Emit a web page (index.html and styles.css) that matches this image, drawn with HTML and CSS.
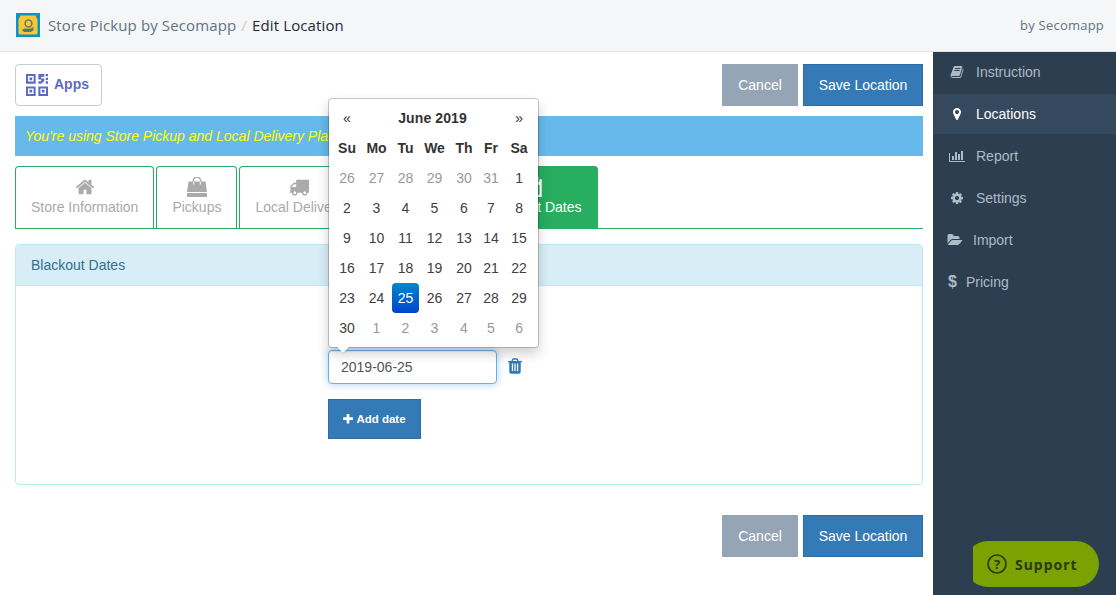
FILE: index.html
```html
<!DOCTYPE html>
<html lang="en">
<head>
<meta charset="utf-8">
<title>Edit Location</title>
<link rel="stylesheet" href="styles.css">
</head>
<body>
<header class="topbar">
  <div class="crumbs">
    <svg class="logo" viewBox="0 0 24 24"><rect width="24" height="24" fill="#0a93c4"/><path d="M4.500 2.500h15l2 4V20a1.500 1.500 0 0 1-1.500 1.500H4A1.500 1.500 0 0 1 2.500 20V6.500z" fill="#f8c832"/><circle cx="12.500" cy="10.500" r="3.400" fill="none" stroke="#5f7a70" stroke-width="1.500"/><path d="M6 17c3-2.500 5-1.200 7-1.200s3-1 4.500-2v3.500l-3 1.700H8z" fill="#4f7a70"/></svg>
    <span class="crumb-app">Store Pickup by Secomapp</span>
    <span class="crumb-sep">/</span>
    <span class="crumb-page">Edit Location</span>
  </div>
  <div class="byline">by Secomapp</div>
</header>
<div class="layout">
  <main class="main">
    <div class="toolbar">
      <a class="apps-btn">
        <svg class="apps-icon" viewBox="0 0 24 24" fill="#5c6ac4"><path d="M0 0h10.500v10.500H0zM2.200 2.200v6.100h6.100V2.200zM3.800 3.800h2.900v2.900H3.800zM0 13.500h10.500V24H0zM2.200 15.700v6.100h6.100v-6.100zM3.800 17.300h2.900v2.900H3.800zM13.500 13.500H24V24H13.500zM15.700 15.700v6.100h6.100v-6.100zM17.300 17.300h2.900v2.900h-2.900zM13.500 0h6.500v3h-3.500v2H20v2.500l-3.500 3h-3V8h3V6h-3zM21.500 0H24v2.500h-2.500zM21.500 4H24v2.500h-2.500zM21.500 8H24v2.500h-2.500z" fill-rule="evenodd"/></svg>
        <span class="apps-label">Apps</span>
      </a>
      <div class="actions">
        <button class="btn btn-cancel">Cancel</button>
        <button class="btn btn-save">Save Location</button>
      </div>
    </div>
    <div class="alert">You're using Store Pickup and Local Delivery Plan</div>
    <nav class="tabs">
      <a class="tab">
        <svg class="tab-icon" viewBox="0 0 1792 1792"><path d="M1472 992v480q0 26-19 45t-45 19h-384v-384h-256v384h-384q-26 0-45-19t-19-45v-480q0-1 .5-3t.5-3l575-474 575 474q1 2 1 6zm223-69l-62 74q-8 9-21 11h-3q-13 0-21-7l-692-577-692 577q-12 8-24 7-13-2-21-11l-62-74q-8-10-7-23.500t11-21.500l719-599q32-26 76-26t76 26l244 204v-195q0-14 9-23t23-9h192q14 0 23 9t9 23v408l219 182q10 8 11 21.500t-7 23.500z"/></svg>
        <span>Store Information</span>
      </a>
      <a class="tab">
        <svg class="tab-icon" viewBox="0 0 20 20"><path d="M1.500 4.500h17L20 15H0z"/><path d="M0 16h20v4H0z"/><path d="M6.200 8V4a3.800 3.800 0 0 1 7.600 0v4" fill="none" stroke="#aaa" stroke-width="1.300"/><path d="M6.200 7.500V4.500h1v3zM12.800 7.500V4.500h1v3z" fill="#fff"/></svg>
        <span>Pickups</span>
      </a>
      <a class="tab">
        <svg class="tab-icon" viewBox="0 0 1792 1792"><path d="M640 1408q0-52-38-90t-90-38-90 38-38 90 38 90 90 38 90-38 38-90zm-384-512h384v-256h-158q-13 0-22 9l-195 195q-9 9-9 22v30zm1280 512q0-52-38-90t-90-38-90 38-38 90 38 90 90 38 90-38 38-90zm256-1088v1024q0 15-4 26.500t-13.500 18.500-16.500 11.500-23.500 6-22.500 2-25.500 0-22.500-.5q0 106-75 181t-181 75-181-75-75-181h-384q0 106-75 181t-181 75-181-75-75-181h-64q-3 0-22.500.5t-25.500 0-22.500-2-23.500-6-16.500-11.500-13.500-18.500-4-26.500q0-26 19-45t45-19v-320q0-8-.5-35t0-38 2.500-34.500 6.500-37 14-30.500 22.500-30l198-198q19-19 50.500-32t58.500-13h160v-192q0-26 19-45t45-19h1024q26 0 45 19t19 45z"/></svg>
        <span>Local Delivery</span>
      </a>
      <a class="tab tab-active">
        <svg class="tab-icon" viewBox="0 0 16 18"><path d="M4 0h2v3H4zM10 0h2v3h-2zM1 2h2v2h4V2h2v2h4V2h2v16H1zM3 7v9h10V7z" fill-rule="evenodd"/></svg>
        <span>Blackout Dates</span>
      </a>
    </nav>
    <section class="panel">
      <div class="panel-heading">Blackout Dates</div>
      <div class="panel-body">
        <div class="date-row">
          <div class="date-field">
            <input class="date-input" type="text" value="2019-06-25">
            <div class="datepicker">
              <table class="cal">
                <colgroup><col class="c1"><col class="c2"><col class="c3"><col class="c4"><col class="c5"><col class="c6"><col class="c7"></colgroup>
                <thead>
                  <tr class="cal-title"><th>«</th><th colspan="5">June 2019</th><th>»</th></tr>
                  <tr><th>Su</th><th>Mo</th><th>Tu</th><th>We</th><th>Th</th><th>Fr</th><th>Sa</th></tr>
                </thead>
                <tbody>
                  <tr><td class="old">26</td><td class="old">27</td><td class="old">28</td><td class="old">29</td><td class="old">30</td><td class="old">31</td><td>1</td></tr>
                  <tr><td>2</td><td>3</td><td>4</td><td>5</td><td>6</td><td>7</td><td>8</td></tr>
                  <tr><td>9</td><td>10</td><td>11</td><td>12</td><td>13</td><td>14</td><td>15</td></tr>
                  <tr><td>16</td><td>17</td><td>18</td><td>19</td><td>20</td><td>21</td><td>22</td></tr>
                  <tr><td>23</td><td>24</td><td class="active">25</td><td>26</td><td>27</td><td>28</td><td>29</td></tr>
                  <tr><td>30</td><td class="old">1</td><td class="old">2</td><td class="old">3</td><td class="old">4</td><td class="old">5</td><td class="old">6</td></tr>
                </tbody>
              </table>
            </div>
          </div>
          <svg class="trash" viewBox="192 128 1408 1536"><path d="M704 1376v-704q0-14-9-23t-23-9h-64q-14 0-23 9t-9 23v704q0 14 9 23t23 9h64q14 0 23-9t9-23zm256 0v-704q0-14-9-23t-23-9h-64q-14 0-23 9t-9 23v704q0 14 9 23t23 9h64q14 0 23-9t9-23zm256 0v-704q0-14-9-23t-23-9h-64q-14 0-23 9t-9 23v704q0 14 9 23t23 9h64q14 0 23-9t9-23zm-544-992h448l-48-117q-7-9-17-11h-317q-10 2-17 11zm928 32v64q0 14-9 23t-23 9h-96v948q0 83-47 143.500t-113 60.500h-832q-66 0-113-58.500t-47-141.500v-952h-96q-14 0-23-9t-9-23v-64q0-14 9-23t23-9h309l70-167q15-37 54-63t79-26h320q40 0 79 26t54 63l70 167h309q14 0 23 9t9 23z"/></svg>
        </div>
        <button class="btn-add">
          <svg class="plus" viewBox="192 192 1408 1408"><path d="M1600 736v192q0 40-28 68t-68 28h-416v416q0 40-28 68t-68 28h-192q-40 0-68-28t-28-68v-416h-416q-40 0-68-28t-28-68v-192q0-40 28-68t68-28h416v-416q0-40 28-68t68-28h192q40 0 68 28t28 68v416h416q40 0 68 28t28 68z"/></svg>
          <span>Add date</span>
        </button>
      </div>
    </section>
    <div class="actions actions-bottom">
      <button class="btn btn-cancel">Cancel</button>
      <button class="btn btn-save">Save Location</button>
    </div>
  </main>
  <aside class="sidebar">
    <a class="nav-item nav-wide">
      <svg class="nav-icon" viewBox="0 0 1792 1792"><path d="M1703 478q40 57 18 129l-275 906q-19 64-76.500 107.500t-122.500 43.500h-923q-77 0-148.500-53.500t-99.500-131.500q-24-67-2-127 0-4 3-27t4-37q1-8-3-21.500t-3-19.500q2-11 8-21t16.500-23.500 16.500-23.500q23-38 45-91.500t30-91.500q3-10 .5-30t-.5-28q3-11 17-28t17-23q21-36 42-92t25-90q1-9-2.500-32t.5-28q4-13 22-30.500t22-22.500q19-26 42.500-84.500t27.500-96.500q1-8-3-25.500t-2-26.500q2-8 9-18t18-23 17-21q8-12 16.500-30.500t15-35 16-36 19.500-32 26.500-23.500 36-11.500 47.500 5.500l-1 3q38-9 51-9h761q74 0 114 56t18 130l-274 906q-36 119-71.500 153.500t-128.500 34.500h-869q-27 0-38 15-11 16-1 43 24 70 144 70h923q29 0 56-15.500t35-41.500l300-987q7-22 5-57 38 15 59 43zm-1064 2q-4 13 2 22.500t20 9.500h608q13 0 25.500-9.500t16.500-22.500l21-64q4-13-2-22.500t-20-9.500h-608q-13 0-25.500 9.500t-16.500 22.500zm-83 256q-4 13 2 22.500t20 9.500h608q13 0 25.500-9.500t16.500-22.500l21-64q4-13-2-22.500t-20-9.500h-608q-13 0-25.500 9.500t-16.500 22.500z"/></svg>
      <span>Instruction</span>
    </a>
    <a class="nav-item nav-wide nav-active">
      <svg class="nav-icon" viewBox="0 0 1792 1792"><path d="M1152 640q0-106-75-181t-181-75-181 75-75 181 75 181 181 75 181-75 75-181zm256 0q0 109-33 179l-364 774q-16 33-47.500 52t-67.500 19-67.500-19-46.500-52l-365-774q-33-70-33-179 0-212 150-362t362-150 362 150 150 362z"/></svg>
      <span>Locations</span>
    </a>
    <a class="nav-item nav-wide">
      <svg class="nav-icon" viewBox="0 0 2048 1792"><path d="M640 896v512h-256v-512h256zm384-512v1024h-256v-1024h256zm1024 1152v128h-2048v-1152h128v1024h1920zm-640-896v768h-256v-768h256zm384-384v1152h-256v-1152h256z"/></svg>
      <span>Report</span>
    </a>
    <a class="nav-item nav-wide">
      <svg class="nav-icon" viewBox="0 0 1792 1792"><path d="M1152 896q0-106-75-181t-181-75-181 75-75 181 75 181 181 75 181-75 75-181zm512-109v222q0 12-8 23t-20 13l-185 28q-19 54-39 91 35 50 107 138 10 12 10 25t-9 23q-27 37-99 108t-94 71q-12 0-26-9l-138-108q-44 23-91 38-16 136-29 186-7 28-36 28h-222q-14 0-24.500-8.500t-11.500-21.500l-28-184q-49-16-90-37l-141 107q-10 9-25 9-14 0-25-11-126-114-165-168-7-10-7-23 0-12 8-23 15-21 51-66.500t54-70.500q-27-50-41-99l-183-27q-13-2-21-12.500t-8-23.500v-222q0-12 8-23t19-13l186-28q14-46 39-92-40-57-107-138-10-12-10-24 0-10 9-23 26-36 98.500-107.500t94.500-71.500q13 0 26 10l138 107q44-23 91-38 16-136 29-186 7-28 36-28h222q14 0 24.500 8.500t11.500 21.500l28 184q49 16 90 37l142-107q9-9 24-9 13 0 25 10 129 119 165 170 7 8 7 22 0 12-8 23-15 21-51 66.500t-54 70.500q26 50 41 98l183 28q13 2 22 12.500t9 23.500z"/></svg>
      <span>Settings</span>
    </a>
    <a class="nav-item nav-import">
      <svg class="nav-icon-import" viewBox="0 0 1920 1792"><path d="M1879 952q0 31-31 66l-336 396q-43 51-120.500 86.500t-143.500 35.500h-1088q-34 0-60.500-13t-26.500-43q0-31 31-66l336-396q43-51 120.500-86.500t143.500-35.500h1088q34 0 60.500 13t26.500 43zm-343-344v160h-832q-94 0-197 47.500t-164 119.500l-337 396-5 6q0-4-.5-12.500t-.5-12.500v-960q0-92 66-158t158-66h320q92 0 158 66t66 158v32h544q92 0 158 66t66 158z"/></svg>
      <span>Import</span>
    </a>
    <a class="nav-item nav-pricing">
      <span class="dollar">$</span>
      <span>Pricing</span>
    </a>
  </aside>
</div>
<div class="support-clip">
  <div class="support">
    <svg class="support-icon" viewBox="0 0 20 20"><circle cx="10" cy="10" r="9" fill="none" stroke="#2c3a06" stroke-width="1.700"/></svg>
    <span class="support-q">?</span>
    <span>Support</span>
  </div>
</div>
</body>
</html>
```
FILE: styles.css
```css
* { box-sizing: border-box; }
html, body { margin: 0; padding: 0; }
body {
  width: 1116px;
  height: 595px;
  overflow: hidden;
  position: relative;
  background: #fff;
  font-family: "Liberation Sans", Arial, sans-serif;
  font-size: 14px;
  color: #333;
}
.topbar {
  height: 52px;
  background: #f4f6f8;
  border-bottom: 1px solid #dfe3e8;
  display: flex;
  align-items: center;
  justify-content: space-between;
  padding: 0 12px 2px 16px;
}
.crumbs { display: flex; align-items: center; font-family: "Open Sans", sans-serif; font-size: 15px; letter-spacing: .13px; }
.logo { width: 24px; height: 24px; margin-right: 8px; display: block; }
.crumb-app { color: #637381; }
.crumb-sep { color: #c4cdd5; margin: 0 5px; }
.crumb-page { color: #212b36; }
.byline { font-family: "Open Sans", sans-serif; font-size: 13px; color: #637381; letter-spacing: .22px; }
.layout { display: flex; height: 543px; }
.main { width: 933px; padding: 12px 10px 0 15px; }
.toolbar { display: flex; justify-content: space-between; height: 42px; }
.apps-btn {
  width: 87px;
  height: 42px;
  border: 1px solid #c4cdd5;
  border-radius: 4px;
  display: flex;
  align-items: center;
  padding-left: 10px;
  color: #5c6ac4;
  font-weight: bold;
  font-size: 14px;
}
.apps-label { margin-bottom: 2px; }
.apps-icon { width: 22px; height: 22px; margin-right: 6px; display: block; }
.actions { display: flex; gap: 5px; }
.actions-bottom { justify-content: flex-end; margin-top: 30px; }
.btn {
  height: 42px;
  border: 1px solid transparent;
  font-family: "Liberation Sans", Arial, sans-serif;
  font-size: 14px;
  color: #fff;
  padding: 0;
}
.btn-cancel { width: 76px; background: #95a5b5; border-color: #95a5b5; }
.btn-save { width: 120px; background: #337ab7; border-color: #2e6da4; }
.alert {
  margin-top: 10px;
  height: 40px;
  background: #68b9eb;
  color: #ffff00;
  font-style: italic;
  line-height: 40px;
  padding-left: 10px;
}
.tabs {
  margin-top: 10px;
  height: 63px;
  display: flex;
  gap: 2px;
  border-bottom: 1px solid #27ae60;
}
.tab {
  height: 62px;
  border: 1px solid #27ae60;
  border-bottom: 0;
  border-radius: 4px 4px 0 0;
  padding: 0 15px;
  display: flex;
  flex-direction: column;
  align-items: center;
  justify-content: flex-end;
  color: #aaa;
  fill: #aaa;
}
.tab span { line-height: 20px; margin-bottom: 11px; }
.tab-icon { width: 20px; height: 20px; display: block; }
.tab-active {
  background: #27ae60;
  color: #fff;
  fill: #fff;
  margin-left: 110px;
}
.panel {
  margin-top: 15px;
  height: 241px;
  border: 1px solid #bce8f1;
  border-radius: 4px;
}
.panel-heading {
  height: 41px;
  background: #d9edf7;
  border-bottom: 1px solid #bce8f1;
  color: #31708f;
  line-height: 40px;
  padding-left: 15px;
  border-radius: 3px 3px 0 0;
}
.panel-body { padding: 64px 0 0 312px; }
.date-row { display: flex; align-items: center; gap: 11px; }
.date-field { position: relative; width: 169px; height: 34px; }
.date-input {
  width: 100%;
  height: 34px;
  border: 1px solid #66afe9;
  border-radius: 4px;
  padding: 0 12px;
  font-family: "Liberation Sans", Arial, sans-serif;
  font-size: 14px;
  color: #555;
  outline: 0;
  box-shadow: inset 0 1px 1px rgba(0,0,0,.075), 0 0 8px rgba(102,175,233,.6);
}
.trash { width: 14px; height: 16px; fill: #337ab7; display: block; margin-bottom: 3px; }
.btn-add {
  margin-top: 15px;
  width: 93px;
  height: 40px;
  background: #337ab7;
  border: 1px solid #2e6da4;
  color: #fff;
  font-family: "Liberation Sans", Arial, sans-serif;
  font-size: 11.5px;
  font-weight: bold;
  display: flex;
  align-items: center;
  justify-content: center;
  gap: 3px;
  padding: 0;
}
.plus { width: 10px; height: 10px; fill: #fff; display: block; }
.datepicker {
  position: absolute;
  left: 0;
  bottom: calc(100% + 2px);
  width: 211px;
  height: 250px;
  background: #fff;
  border: 1px solid rgba(0,0,0,.2);
  border-radius: 4px;
  padding: 4px;
  box-shadow: 0 6px 12px rgba(0,0,0,.175);
  background-clip: padding-box;
  z-index: 5;
}
.datepicker::before {
  content: "";
  position: absolute;
  left: 7px;
  bottom: -7px;
  border-left: 7px solid transparent;
  border-right: 7px solid transparent;
  border-top: 7px solid rgba(0,0,0,.15);
}
.datepicker::after {
  content: "";
  position: absolute;
  left: 8px;
  bottom: -6px;
  border-left: 6px solid transparent;
  border-right: 6px solid transparent;
  border-top: 6px solid #fff;
}
.cal {
  width: 201px;
  table-layout: fixed;
  border-collapse: collapse;
  border-spacing: 0;
  color: #404040;
}
.c1 { width: 28px; }
.c2 { width: 31px; }
.c3 { width: 27px; }
.c4 { width: 31px; }
.c5 { width: 28px; }
.c6 { width: 26px; }
.c7 { width: 30px; }
.cal th, .cal td { height: 30px; padding: 0; text-align: center; font-size: 14px; }
.cal th { font-weight: bold; color: #333; }
.cal-title th:nth-child(1), .cal-title th:nth-child(3) { font-weight: normal; font-size: 14px; }
.cal-title th:nth-child(2) { letter-spacing: .1px; }
.cal td.old { color: #999; }
.cal td.active {
  color: #fff;
  background: linear-gradient(to bottom, #08c, #04c);
  border-radius: 4px;
}
.sidebar { width: 183px; height: 543px; background: #2c3e50; flex: none; }
.nav-item {
  height: 40px;
  margin-bottom: 2px;
  display: flex;
  align-items: center;
  color: #aebbc7;
  fill: #aebbc7;
}
.nav-wide { padding-left: 16px; }
.nav-wide .nav-icon { width: 16px; height: 14px; margin-right: 11px; display: block; flex: none; }
.nav-active { background: #34495e; color: #fff; fill: #fff; }
.nav-import { padding-left: 14px; }
.nav-icon-import { width: 16px; height: 14px; margin-right: 10px; display: block; }
.nav-pricing { padding-left: 15px; }
.dollar { font-weight: bold; font-size: 16px; margin-right: 9px; }
.support-clip {
  position: absolute;
  left: 973px;
  top: 541px;
  width: 126px;
  height: 46px;
  overflow: hidden;
}
.support {
  width: 134px;
  height: 46px;
  margin-left: -8px;
  border-radius: 23px;
  background: #7aa200;
  display: flex;
  align-items: center;
  padding-left: 22px;
  color: #2c3a06;
  font-family: "Noto Sans", sans-serif;
  font-size: 14px;
  font-weight: bold;
  letter-spacing: 1px;
  position: relative;
}
.support-icon { width: 20px; height: 20px; margin-right: 8px; display: block; flex: none; }
.support-q { position: absolute; left: 22px; width: 20px; text-align: center; letter-spacing: 0; font-size: 13px; }
```
